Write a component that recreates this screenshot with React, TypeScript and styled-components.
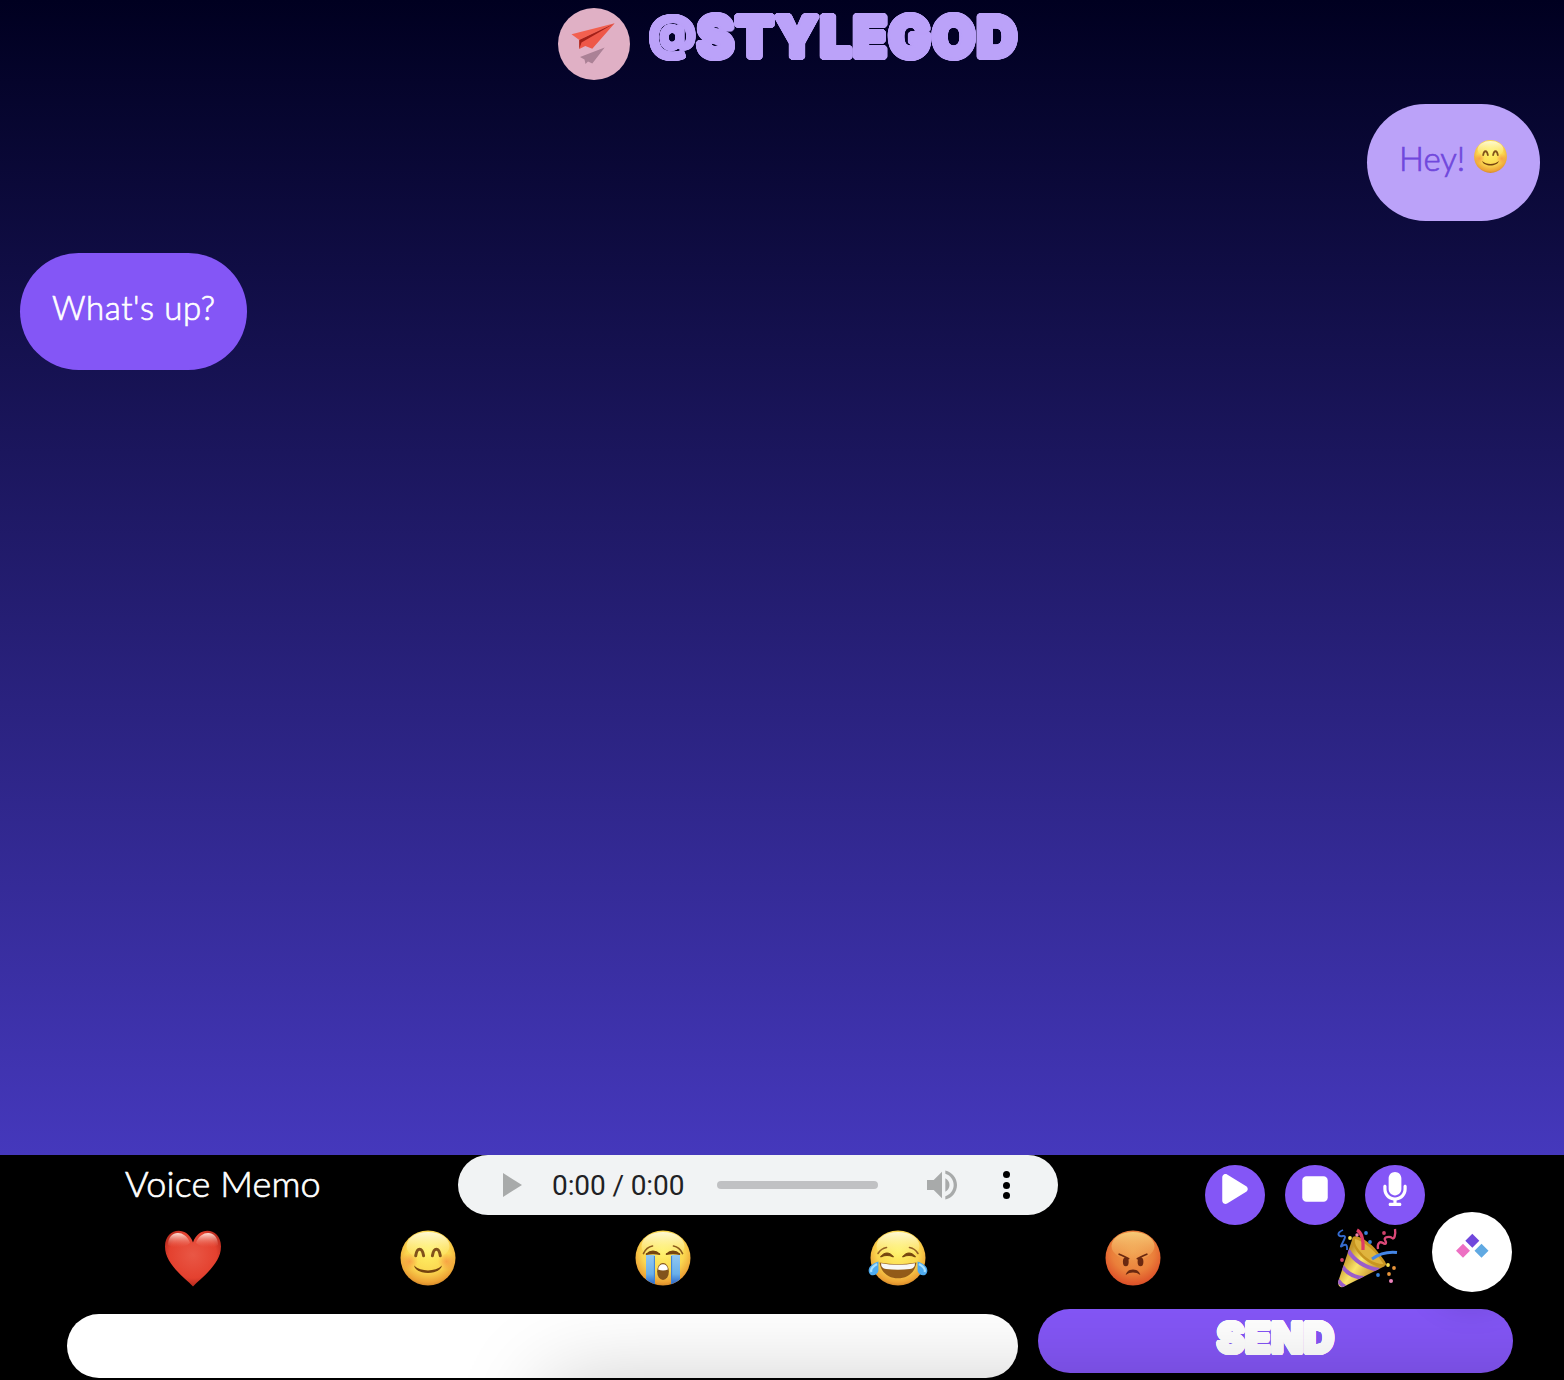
import React from "react";
import styled, { createGlobalStyle } from "styled-components";
import { FaPlay, FaStop, FaMicrophone } from "react-icons/fa6";

const Global = createGlobalStyle`
  *, *::before, *::after { box-sizing: border-box; }
  body { margin: 0; background: #000; font-family: Lato, "Liberation Sans", sans-serif; }
  button { border: 0; padding: 0; font: inherit; color: inherit; }
`;

const Page = styled.div`
  position: relative;
  height: 1380px;
  overflow: hidden;
  display: flex;
  flex-direction: column;
`;

const Chat = styled.main`
  height: 1155px;
  background: linear-gradient(#000020, #4538bc);
  display: flex;
  flex-direction: column;
`;

const Header = styled.header`
  height: 80px;
  padding: 8px 0 0 558px;
  display: flex;
  align-items: flex-start;
`;

const Avatar = styled.div`
  width: 72px;
  height: 72px;
  border-radius: 50%;
  background: #e0b0c5;
  overflow: hidden;
  flex: none;
`;

/* Ring of hard shadows: thickens the letters and rounds their corners. */
const ring = (radius: number) =>
  Array.from({ length: 24 }, (_, i) => {
    const a = (i * Math.PI) / 12;
    return `${(Math.cos(a) * radius).toFixed(2)}px ${(Math.sin(a) * radius).toFixed(2)}px 0 currentColor`;
  }).join(", ");

const Chunky = styled.span<{ $size: number; $round: number; $spacing: number }>`
  font-family: Inter, "Liberation Sans", sans-serif;
  font-weight: 900;
  font-size: ${(p) => p.$size}px;
  letter-spacing: ${(p) => p.$spacing}px;
  text-shadow: ${(p) => ring(p.$round)};
  line-height: 58px;
  white-space: nowrap;
`;

const AtSign = styled.span`
  font-size: 46px;
  font-weight: 700;
  letter-spacing: 1px;
  position: relative;
  top: -8px;
  text-shadow: ${ring(2)};
`;

const Title = styled.h1`
  margin: 0 0 0 19px;
  color: #bba2f9;
  line-height: 58px;
  font-size: 54px;
  will-change: transform;
`;

const Messages = styled.section`
  display: flex;
  flex-direction: column;
  gap: 32px;
  padding: 24px 24px 0 20px;
`;

const Bubble = styled.div<{ $mine?: boolean }>`
  align-self: ${(p) => (p.$mine ? "flex-end" : "flex-start")};
  width: ${(p) => (p.$mine ? 173 : 227)}px;
  height: 117px;
  padding: 34px 32px 0;
  border-radius: 60px;
  display: flex;
  align-items: flex-start;
  background: ${(p) => (p.$mine ? "#bba2f9" : "#8456f6")};
  color: ${(p) => (p.$mine ? "#7047dc" : "#fff")};
`;

const Thin = styled.span<{ $size: number; $spacing?: number }>`
  font-weight: 300;
  font-size: ${(p) => p.$size}px;
  letter-spacing: ${(p) => p.$spacing ?? 0}px;
  -webkit-text-stroke: 0.7px currentColor;
  line-height: 40px;
  white-space: nowrap;
`;

const SmallFace = styled.span`
  width: 37px;
  height: 37px;
  margin-left: auto;
  margin-right: -1px;
  display: block;
`;

const Controls = styled.footer`
  height: 225px;
  background: #000;
  display: flex;
  flex-direction: column;
`;

const MemoRow = styled.div`
  height: 70px;
  display: grid;
  grid-template-columns: 333px 600px auto;
  padding-left: 125px;
`;

const MemoLabel = styled.div`
  padding-top: 8px;
  color: #fff;
`;

const Player = styled.div`
  height: 60px;
  border-radius: 30px;
  background: #f1f3f4;
  display: flex;
  align-items: center;
  padding: 0 40px 0 45px;
`;

const Time = styled.span`
  font-family: Roboto, "Liberation Sans", sans-serif;
  font-size: 28px;
  letter-spacing: -0.1px;
  width: 135px;
  margin-left: 30px;
  color: #202124;
  white-space: nowrap;
`;

const Track = styled.span`
  width: 161px;
  height: 8px;
  border-radius: 4px;
  background: #c0c1c3;
  margin-left: 30px;
  margin-right: 49px;
`;

const Dots = styled.span`
  width: 8px;
  height: 28px;
  margin-left: 45px;
  display: flex;
  flex-direction: column;
  align-items: center;
  justify-content: space-between;
  i { width: 7px; height: 7px; border-radius: 50%; background: #000; }
`;

const Recorder = styled.div`
  display: flex;
  gap: 20px;
  padding-top: 10px;
  margin-left: 147px;
`;

const RoundButton = styled.button`
  width: 60px;
  height: 60px;
  flex: none;
  border-radius: 50%;
  background: #8456f6;
  color: #fff;
  font-size: 34px;
  display: flex;
  align-items: flex-start;
  justify-content: center;
  padding-top: 7px;
`;

const Reactions = styled.div`
  height: 84px;
  padding: 2px 79px 0 76px;
  display: grid;
  grid-template-columns: repeat(6, 1fr);
  justify-items: center;
`;

const Reaction = styled.button`
  width: 62px;
  height: 62px;
  background: none;
  svg { display: block; width: 100%; height: 100%; }
`;

const Compose = styled.form`
  display: flex;
  gap: 20px;
  padding-left: 67px;
`;

const MessageInput = styled.input`
  width: 951px;
  height: 64px;
  margin-top: 5px;
  border: 0;
  border-radius: 32px;
  background: #fff;
  padding: 0 32px;
  outline: none;
`;

const Send = styled.button`
  width: 475px;
  height: 64px;
  border-radius: 32px;
  background: #8456f6;
  color: #fff;
  display: flex;
  align-items: flex-start;
  justify-content: center;
`;

const BottomShade = styled.div`
  position: absolute;
  left: 548px;
  top: 1382px;
  width: 1200px;
  height: 300px;
  box-shadow: 0 0 84px rgba(0, 0, 0, 0.21);
  pointer-events: none;
`;

const Badge = styled.button`
  position: absolute;
  left: 1432px;
  top: 1212px;
  width: 80px;
  height: 80px;
  border-radius: 50%;
  background: #fff;
  box-shadow: 0 10px 36px rgba(0, 0, 0, 0.2);
  svg { display: block; }
`;

const Plane = () => (
  <svg width="72" height="72" viewBox="0 0 72 72">
    <defs>
      <filter id="soft" x="-20%" y="-20%" width="140%" height="140%">
        <feGaussianBlur stdDeviation="0.7" />
      </filter>
    </defs>
    <path d="M22 49 46.700 39.500 34.300 55.500 30 53.500 27.500 56 26.500 51.500Z" fill="#ab8196" filter="url(#soft)" />
    <path d="M13.500 26.300 56.700 15.300 21.300 32Z" fill="#f2604f" />
    <path d="M21.300 32 56.700 15.300 34.300 40.700 27.300 38 21.300 41Z" fill="#ee5748" />
    <path d="M21.300 32 56.700 15.300 23.500 34.500 21.300 41Z" fill="#a32018" />
  </svg>
);

const FaceShell = ({ id, angry, children }: { id: string; angry?: boolean; children: React.ReactNode }) => (
  <svg viewBox="-31 -31 62 62" width="100%" height="100%">
    <defs>
      <radialGradient id={id} cx="0.5" cy="0.38" r="0.64">
        <stop offset="0" stopColor={angry ? "#f0a04e" : "#fff265"} />
        <stop offset="0.6" stopColor={angry ? "#ea7f3a" : "#fbd750"} />
        <stop offset="0.88" stopColor={angry ? "#e05a2c" : "#eda335"} />
        <stop offset="1" stopColor={angry ? "#d64c28" : "#cf8326"} />
      </radialGradient>
      <linearGradient id={id + "g"} x1="0" y1="0" x2="0" y2="1">
        <stop offset="0" stopColor={angry ? "#f8d37e" : "#fffde4"} stopOpacity="0.9" />
        <stop offset="1" stopColor={angry ? "#f3a557" : "#fff583"} stopOpacity={angry ? 0.25 : 0} />
      </linearGradient>
    </defs>
    <circle r="27.500" fill={`url(#${id})`} />
    <ellipse cy="-12" rx="21.500" ry="14" fill={`url(#${id}g)`} />
    {children}
  </svg>
);

const Smile = ({ id }: { id: string }) => (
  <FaceShell id={id}>
    <defs>
      <radialGradient id={id + "c"}>
        <stop offset="0" stopColor="#f5793b" stopOpacity="0.55" />
        <stop offset="1" stopColor="#f5793b" stopOpacity="0" />
      </radialGradient>
    </defs>
    <circle cx="-18.500" cy="3.500" r="8.500" fill={`url(#${id}c)`} />
    <circle cx="18.500" cy="3.500" r="8.500" fill={`url(#${id}c)`} />
    <path d="M-12.300-2.200C-11-11-5.800-11-4.400-2.200M4.400-2.200C5.800-11 11-11 12.300-2.200" fill="none" stroke="#81521b" strokeLinecap="round" strokeWidth="3" />
    <path d="M-14 7.500C-7 14 7 14 14 7.500 12 17.500-12 17.500-14 7.500Z" fill="#75430f" />
  </FaceShell>
);

const Sob = () => (
  <FaceShell id="sob">
    <defs>
      <linearGradient id="stream" x1="0" y1="0" x2="0" y2="1">
        <stop offset="0" stopColor="#91c8f2" />
        <stop offset="0.65" stopColor="#69afe9" />
        <stop offset="1" stopColor="#2c65c8" />
      </linearGradient>
    </defs>
    <path d="M-17-3h8.800v29.200Q-13 25-17 21.600ZM17-3H8.200v29.200Q13 25 17 21.600Z" fill="url(#stream)" />
    <path d="M-8.600-2v28M8.600-2v28" stroke="#3d81d6" strokeWidth="1" />
    <path d="M-17-3.500Q-10-10-3-3.500-10-5.500-17-3.500ZM17-3.500Q10-10 3-3.500 10-5.500 17-3.500Z" fill="#76460f" stroke="#76460f" strokeWidth="1.300" />
    <path d="M-19.500-4.500Q-16.500-11-10.500-12M19.500-4.500Q16.500-11 10.500-12" fill="none" stroke="#8b5a1a" strokeWidth="1.700" strokeLinecap="round" />
    <ellipse cy="13.500" rx="5.900" ry="8.500" fill="#82531b" />
    <path d="M-4.900 11.500C-4.500 4.600 4.500 4.600 4.900 11.500Q0 13.500-4.900 11.500Z" fill="#fff" />
  </FaceShell>
);

const Joy = () => (
  <FaceShell id="joy">
    <path d="M-17.500-1Q-11-9-4.500-1-11-4-17.500-1ZM17.500-1Q11-9 4.500-1 11-4 17.500-1Z" fill="#76460f" stroke="#76460f" strokeWidth="1.200" />
    <path d="M-20-4.500Q-17-9.500-11.500-10.500M20-4.500Q17-9.500 11.500-10.500" fill="none" stroke="#966225" strokeWidth="1.600" strokeLinecap="round" />
    <path d="M-18.500 4.500Q0 8 18.500 4.500C17 15 9 20.300 0 20.300S-17 15-18.500 4.500Z" fill="#925b18" />
    <path d="M-17 5.200Q0 8.300 17 5.200 17 10.500 12 11 0 12.300-12 11-17 10.500-17 5.200Z" fill="#f8f8f5" />
    <path d="M-19.500 3.500C-27 6-30.500 10-29 14.500S-21 18-19.600 13ZM19.500 3.500C27 6 30.500 10 29 14.500S21 18 19.600 13Z" fill="#4eabef" />
    <path d="M-21 6C-26 9-27.500 12-26.500 14M21 6C26 9 27.500 12 26.500 14" fill="none" stroke="#a8e0ff" strokeWidth="2.200" />
  </FaceShell>
);

const Angry = () => (
  <FaceShell id="angry" angry>
    <g fill="#6a2810">
      <ellipse cx="-7.200" cy="3.700" rx="2.900" ry="4.500" />
      <ellipse cx="7.500" cy="3.700" rx="2.900" ry="4.500" />
      <path d="M-7.300 17C-6 9.800 6 9.800 7.300 17 3 13.700-3 13.700-7.300 17Z" />
    </g>
    <path d="M-13.800-3.800Q-10.500-2.500-4.300.700M13.800-3.800Q10.500-2.500 4.300.700" fill="none" stroke="#6a2810" strokeWidth="1.700" strokeLinecap="round" />
  </FaceShell>
);

const Heart = () => (
  <svg viewBox="-31 -31 62 62">
    <defs>
      <radialGradient id="heart" cx="0.5" cy="0.43" r="0.6">
        <stop offset="0" stopColor="#e95745" />
        <stop offset="0.7" stopColor="#e4412f" />
        <stop offset="1" stopColor="#ab2419" />
      </radialGradient>
      <linearGradient id="shine" x1="0" y1="0" x2="0" y2="1">
        <stop offset="0" stopColor="#ffeae2" stopOpacity="0.95" />
        <stop offset="1" stopColor="#ec6553" stopOpacity="0" />
      </linearGradient>
    </defs>
    <path d="M0 28.500C-9 19-28 6-28-11.500-28-30-6-33 0-15.500 6-33 28-30 28-11.500 28 6 9 19 0 28.500Z" fill="url(#heart)" />
    <path d="M-25-13C-25-28-8-29-3-15-9-10-20-9-25-13ZM25-13C25-28 8-29 3-15 9-10 20-9 25-13Z" fill="url(#shine)" />
  </svg>
);

const Party = () => (
  <svg viewBox="0 -1 62 62">
    <defs>
      <linearGradient id="cone" x1="0.15" y1="0.4" x2="0.7" y2="0.8">
        <stop offset="0" stopColor="#c4962a" />
        <stop offset="0.45" stopColor="#fae56b" />
        <stop offset="1" stopColor="#c89632" />
      </linearGradient>
      <clipPath id="coneClip">
        <path d="M16 9Q19 23 29 31T48 38L6 59Q1 60 1 54Z" />
      </clipPath>
    </defs>
    <path d="M16 9Q19 23 29 31T48 38L6 59Q1 60 1 54Z" fill="url(#cone)" />
    <g clipPath="url(#coneClip)" fill="none" stroke="#9a5dcb" strokeWidth="4">
      <path d="M11 22Q20 38 42 42M5 38Q12 49 27 50M0 51Q4 57 10 60" />
    </g>
    <path d="M16 9C20 6 33 14 40 23S52 37 47 38C39 41 27 32 22 26S14 12 16 9Z" fill="#c8951f" />
    <path d="M18 11C24 12 35 20 40 27S47 36 46 36C37 36 27 29 22 22S18 14 18 11Z" fill="#dfb43e" />
    <path d="M35 31Q46 23 60 24.500" fill="none" stroke="#4586e6" strokeWidth="3" />
    <path d="M20 2Q27 6 26 22" fill="none" stroke="#df3c65" strokeWidth="3.200" />
    <path d="M6 2C-1 5 1 9 6 8S5 15 4 18 11 11 10 22" fill="none" stroke="#356bcf" strokeWidth="1.900" />
    <path d="M41 21C40 15 43 13 46 15S50 15 48 12 53 8 55 10 59 7 58 1" fill="none" stroke="#dc4978" strokeWidth="2.300" />
    <circle cx="13" cy="10" r="1.900" fill="#f7e253" />
    <circle cx="20" cy="7" r="1.700" fill="#ed83ac" />
    <circle cx="29" cy="5" r="1.900" fill="#357fdb" />
    <circle cx="33" cy="14" r="1.900" fill="#357fdb" />
    <circle cx="47" cy="5" r="1.900" fill="#cf416a" />
    <circle cx="5" cy="32" r="1.900" fill="#cf416a" />
    <circle cx="51" cy="37" r="1.900" fill="#f7e253" />
    <circle cx="57" cy="40" r="1.900" fill="#e8953b" />
    <circle cx="52" cy="46" r="1.900" fill="#e8953b" />
    <circle cx="41" cy="47" r="1.900" fill="#357fdb" />
    <circle cx="54" cy="53" r="2" fill="#ed83bd" />
  </svg>
);

const PlayerPlay = () => (
  <svg width="19" height="24" viewBox="0 0 19 24">
    <path d="M0 0 19 12 0 24Z" fill="#a8aaaa" />
  </svg>
);

const Volume = () => (
  <svg width="30" height="34" viewBox="0 -2 30 34">
    <path
      d="M0 10v10h6.700L15 28.300V1.700L6.700 10H0Zm22.500 5c0-2.950-1.700-5.480-4.170-6.720v13.420c2.470-1.220 4.170-3.750 4.170-6.700ZM18.330.380v3.440C23.150 5.250 26.670 9.720 26.670 15s-3.520 9.750-8.340 11.180v3.440C25.020 28.100 30 22.130 30 15S25.020 1.900 18.330.380Z"
      fill="#a8aaaa"
    />
  </svg>
);

const Diamonds = () => (
  <svg width="80" height="80" viewBox="0 0 80 80">
    <path d="m40.300 21.700 7 7-7 7-7-7Z" fill="#7047dc" />
    <path d="m31 31.700 7 7-7 7-7-7Z" fill="#ed70c3" />
    <path d="m49.500 31.700 7 7-7 7-7-7Z" fill="#60a9e2" />
  </svg>
);

export default function App() {
  return (
    <Page>
      <Global />
      <Chat>
        <Header>
          <Avatar><Plane /></Avatar>
          <Title>
            <Chunky $size={56} $round={2.6} $spacing={1.3}><AtSign>@</AtSign>STYLEGOD</Chunky>
          </Title>
        </Header>
        <Messages>
          <Bubble $mine>
            <Thin $size={33}>Hey!</Thin>
            <SmallFace><Smile id="tiny" /></SmallFace>
          </Bubble>
          <Bubble>
            <Thin $size={33} $spacing={0.6}>What's up?</Thin>
          </Bubble>
        </Messages>
      </Chat>
      <Controls>
        <MemoRow>
          <MemoLabel><Thin $size={36} $spacing={0.15}>Voice Memo</Thin></MemoLabel>
          <Player>
            <PlayerPlay />
            <Time>0:00 / 0:00</Time>
            <Track />
            <Volume />
            <Dots><i /><i /><i /></Dots>
          </Player>
          <Recorder>
            <RoundButton type="button" aria-label="Play"><FaPlay /></RoundButton>
            <RoundButton type="button" aria-label="Stop"><FaStop /></RoundButton>
            <RoundButton type="button" aria-label="Record"><FaMicrophone /></RoundButton>
          </Recorder>
        </MemoRow>
        <Reactions>
          <Reaction><Heart /></Reaction>
          <Reaction><Smile id="smile" /></Reaction>
          <Reaction><Sob /></Reaction>
          <Reaction><Joy /></Reaction>
          <Reaction><Angry /></Reaction>
          <Reaction><Party /></Reaction>
        </Reactions>
        <Compose>
          <MessageInput aria-label="Message" />
          <Send type="button"><Chunky $size={42} $round={1.8} $spacing={0.3}>SEND</Chunky></Send>
        </Compose>
      </Controls>
      <BottomShade />
      <Badge aria-label="Menu"><Diamonds /></Badge>
    </Page>
  );
}
